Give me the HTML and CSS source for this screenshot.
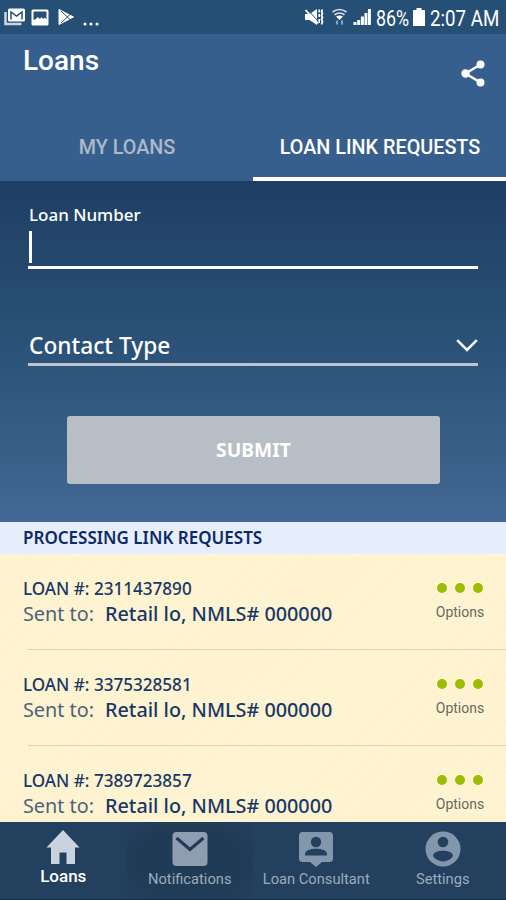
FILE: index.html
```html
<!DOCTYPE html>
<html lang="en">
<head>
	<meta charset="utf-8">
	<title>Loans</title>
	<link rel="stylesheet" href="styles.css">
</head>
<body>
	<div class="statusbar">
		<div class="notices">
			<svg width="22" height="18" viewBox="0 0 22 18">
				<path d="M1.500 4v12h16" fill="none" stroke="#c9d3df" stroke-width="2.600"/>
				<rect x="4" y="0.500" width="17" height="13" rx="1.500" fill="#fff"/>
				<path d="M7 11.500V4l5.500 4L18 4v7.500" fill="none" stroke="#264f76" stroke-width="1.500"/>
			</svg>
			<svg class="photo" width="18" height="17" viewBox="0 0 18 17">
				<rect x="0.500" y="0.500" width="17" height="16" rx="1.500" fill="#fff"/>
				<path d="M2.500 2.500h13v8l-1.500-2-2 1.500-1.500-2-1.500 2-2.500-2-1.500 2-2.500 1z" fill="#264f76"/>
			</svg>
			<svg class="play" width="17" height="18" viewBox="0 0 17 18">
				<path d="M1 1.500v15L15.500 9z" fill="#fff" stroke="#fff" stroke-linejoin="round"/>
				<path d="M3 3l9 8.500M3 15l9-8.500" stroke="#264f76" stroke-width="1"/>
			</svg>
			<svg class="more" width="16" height="4" viewBox="0 0 16 4">
				<circle cx="2" cy="2" r="1.500" fill="#fff"/>
				<circle cx="8" cy="2" r="1.500" fill="#fff"/>
				<circle cx="14" cy="2" r="1.500" fill="#fff"/>
			</svg>
		</div>
		<div class="system">
			<svg width="20" height="18" viewBox="0 0 20 18">
				<path d="M1 6h4.500L13 1v16l-7.500-5H1z" fill="#fff"/>
				<path d="M3.500 1.500L14 13" stroke="#264f76" stroke-width="1"/>
				<path d="M1.500 2L14 15.500" stroke="#fff" stroke-width="1.800"/>
				<path d="M15.200 1.500v3M15.200 6v3M15.200 11v4" stroke="#fff" stroke-width="1.600"/>
				<path d="M18.500 1.500l-1 2 1 2-1 2 1 2-1 2 1 2-1 3" fill="none" stroke="#fff" stroke-width="1.700"/>
			</svg>
			<svg class="wifi" width="15" height="18" viewBox="0 0 15 18">
				<path d="M0.500 4Q7.500-1 14.500 4M2.500 6.800q5-3.600 10 0" fill="none" stroke="#d5deea" stroke-width="1.700"/>
				<path d="M4 8.500q3.500-2 7 0L7.500 12z" fill="#fff"/>
				<path d="M5 12.500v4M10 12.500v4" stroke="#7fa6cf" stroke-width="2.200"/>
			</svg>
			<svg class="signal" width="18" height="18" viewBox="0 0 18 18">
				<path d="M0.500 17v-3h3v3zM4.200 17v-5h3v5zM7.900 17V8.500h3V17zM11.500 17V5h2.800v12zM14.900 17V1h3v16z" fill="#fff"/>
			</svg>
			<span class="percent">86%</span>
			<svg class="battery" width="12" height="18" viewBox="0 0 12 18">
				<path d="M3.500 0h5v2h3q.5 0 .5.500v15q0 .5-.5.500h-11Q0 18 0 17.500v-15Q0 2 .5 2h3z" fill="#fff"/>
			</svg>
			<span class="clock">2:07 AM</span>
		</div>
	</div>

	<header>
		<div class="titlebar">
			<h1>Loans</h1>
			<svg class="share" width="24" height="27" viewBox="0 0 24 27">
				<path d="M19.500 4.500L4.500 13.500l15 9" fill="none" stroke="#fff" stroke-width="2.500"/>
				<circle cx="19.500" cy="4.500" r="4" fill="#fff"/>
				<circle cx="4.500" cy="13.500" r="4.200" fill="#fff"/>
				<circle cx="19.500" cy="22.500" r="4" fill="#fff"/>
			</svg>
		</div>
		<nav class="tabs">
			<a class="tab"><span>MY LOANS</span></a>
			<a class="tab active"><span>LOAN LINK REQUESTS</span></a>
		</nav>
	</header>

	<form>
		<label class="loan-label">Loan Number</label>
		<div class="loan-input"><i class="caret"></i></div>
		<div class="contact">
			<span>Contact Type</span>
			<svg width="22" height="13" viewBox="0 0 22 13">
				<path d="M1.200 1.200L11 11l9.800-9.800" fill="none" stroke="#fff" stroke-width="2.500"/>
			</svg>
		</div>
		<button type="button">SUBMIT</button>
	</form>

	<h2>PROCESSING LINK REQUESTS</h2>

	<section class="requests">
		<article>
			<div class="info">
				<div class="number">LOAN #: 2311437890</div>
				<div class="sent"><span class="to">Sent to:</span><b>Retail lo, NMLS# 000000</b></div>
			</div>
			<div class="options">
				<div class="dots"><i></i><i></i><i></i></div>
				<span>Options</span>
			</div>
		</article>
		<article>
			<div class="info">
				<div class="number">LOAN #: 3375328581</div>
				<div class="sent"><span class="to">Sent to:</span><b>Retail lo, NMLS# 000000</b></div>
			</div>
			<div class="options">
				<div class="dots"><i></i><i></i><i></i></div>
				<span>Options</span>
			</div>
		</article>
		<article>
			<div class="info">
				<div class="number">LOAN #: 7389723857</div>
				<div class="sent"><span class="to">Sent to:</span><b>Retail lo, NMLS# 000000</b></div>
			</div>
			<div class="options">
				<div class="dots"><i></i><i></i><i></i></div>
				<span>Options</span>
			</div>
		</article>
	</section>

	<footer>
		<a class="item current">
			<svg width="36" height="36" viewBox="0 0 36 36">
				<path d="M18 1L1.500 18.500H6V35h8.500V23.500h7V35H30V18.500h4.500z" fill="#c9d3e0"/>
			</svg>
			<span>Loans</span>
		</a>
		<a class="item pressed">
			<svg width="36" height="36" viewBox="0 0 36 36">
				<rect x="0.500" y="1" width="35" height="34" rx="4" fill="#8e9eb0"/>
				<path d="M4.500 7L18 18.500 31.500 7" fill="none" stroke="#203b57" stroke-width="3.200"/>
			</svg>
			<span>Notifications</span>
		</a>
		<a class="item">
			<svg width="36" height="36" viewBox="0 0 36 36">
				<path d="M4.500 1h27q3.500 0 3.500 3.500v23q0 3.500-3.500 3.500H24l-6 5-6-5H4.500Q1 31 1 27.500v-23Q1 1 4.500 1z" fill="#8296ac"/>
				<circle cx="18" cy="11" r="5.200" fill="#24405f"/>
				<path d="M7 24.500v-1.500c0-7 22-7 22 0v1.500z" fill="#24405f"/>
			</svg>
			<span>Loan Consultant</span>
		</a>
		<a class="item">
			<svg width="36" height="36" viewBox="0 0 36 36">
				<circle cx="18" cy="18" r="17.500" fill="#8296ac"/>
				<circle cx="18" cy="11" r="5.300" fill="#24405f"/>
				<path d="M8 25c0-7 20-7 20 0-2.500 3.700-6 5.400-10 5.400S10.500 28.700 8 25z" fill="#24405f"/>
			</svg>
			<span>Settings</span>
		</a>
	</footer>
</body>
</html>
```
FILE: styles.css
```css
*{
	box-sizing: border-box;
}
body{
	margin: 0;
	width: 506px;
	height: 900px;
	overflow: hidden;
	display: flex;
	flex-direction: column;
	font-family: Roboto, sans-serif;
	color: #fff;
	background: #24405f;
}
svg{
	display: block;
	flex: none;
}
span, b, h1, h2, .number{
	white-space: nowrap;
}

/* status bar */
.statusbar{
	height: 34px;
	flex: none;
	display: flex;
	justify-content: space-between;
	padding: 0 8px 0 4px;
	background: #264f76;
}
.notices, .system{
	display: flex;
	align-items: center;
}
.photo{
	margin-left: 5px;
}
.play{
	margin-left: 9px;
}
.more{
	margin: 14px 0 0 8px;
}
.wifi{
	margin-left: 8px;
}
.signal{
	margin-left: 6px;
}
.percent, .clock{
	font-size: 21.5px;
	line-height: 34px;
	padding-top: 3px;
	transform-origin: left center;
}
.percent{
	width: 34px;
	margin-left: 5px;
	transform: scaleX(0.83);
}
.battery{
	margin-left: 3px;
}
.clock{
	width: 68px;
	margin-left: 5px;
	transform: scaleX(0.87);
}

/* title and tabs */
header{
	height: 147px;
	flex: none;
	background: #365f8d;
}
.titlebar{
	height: 80px;
	display: flex;
	justify-content: space-between;
	padding: 0 21px 0 23px;
}
h1{
	margin: 10px 0 0;
	font-size: 28px;
	line-height: 34px;
	font-weight: 500;
}
.share{
	margin-top: 26px;
}
.tabs{
	display: flex;
	height: 67px;
}
.tab{
	width: 50%;
	padding-left: 1px;
	text-align: center;
	font-size: 19.8px;
	line-height: 68px;
	font-weight: 500;
	color: #acb9c9;
}
.active{
	color: #fff;
	border-bottom: 4px solid #fff;
}

/* form */
form{
	height: 341px;
	flex: none;
	display: flex;
	flex-direction: column;
	padding: 0 28px;
	font-family: "Noto Sans", "Open Sans", sans-serif;
	background: linear-gradient(#1e3f63, #2c5379 52%, #426894);
}
.loan-label{
	margin-top: 22px;
	padding-left: 1px;
	font-size: 17px;
	line-height: 24px;
	font-weight: 500;
}
.loan-input{
	height: 42px;
	padding-top: 4px;
	border-bottom: 3px solid #fff;
}
.caret{
	display: block;
	width: 3px;
	height: 32px;
	margin-left: 1px;
	background: #fff;
}
.contact{
	height: 47px;
	margin-top: 50px;
	display: flex;
	justify-content: space-between;
	font-size: 22.7px;
	line-height: 30px;
	font-weight: 500;
	padding: 12px 0 0 1px;
	border-bottom: 3px solid #bcc5d0;
}
.contact svg{
	margin-top: 8px;
}
button{
	height: 68px;
	margin: 50px 38px 0 39px;
	padding: 0 0 2px;
	border: 0;
	border-radius: 3px;
	font: bold 19.3px "Noto Sans", sans-serif;
	color: #fff;
	background: #b8bec5;
}

/* requests */
h2{
	height: 32px;
	flex: none;
	margin: 0;
	padding-left: 23px;
	font: 600 17px/31px "Noto Sans", sans-serif;
	color: #0c2a66;
	background: #e7eefb;
}
.requests{
	height: 268px;
	flex: none;
	overflow: hidden;
	font-family: "Noto Sans", "Open Sans", sans-serif;
	color: #173868;
	background: repeating-linear-gradient(135deg, #fff3cf 0, #fff3cf 4px, #fff6da 5px, #fff3cf 6px);
}
article{
	height: 96px;
	display: flex;
	justify-content: space-between;
	padding: 0 21px 0 23px;
	background: linear-gradient(#d9d3bd, #d9d3bd) 28px 95px / 478px 2px no-repeat;
}
.number{
	margin-top: 23px;
	font-size: 17.1px;
	line-height: 24px;
	font-weight: 500;
}
.sent{
	font-size: 19.8px;
	line-height: 26px;
	display: flex;
}
.to{
	width: 82px;
	color: #4b6478;
}
.sent b{
	font-weight: 500;
}
.options{
	width: 50px;
	display: flex;
	flex-direction: column;
	align-items: center;
	padding-top: 29px;
	font: 14px/20px Roboto, sans-serif;
	color: #6a6a5e;
}
.dots{
	display: flex;
	gap: 8px;
	margin-bottom: 9px;
}
.dots i{
	width: 10px;
	height: 10px;
	border-radius: 50%;
	background: #9dbd05;
}

/* bottom navigation */
footer{
	height: 78px;
	flex: none;
	display: flex;
	background: #24405f;
	border-bottom: 1px solid #102c4a;
}
.item{
	width: 25%;
	display: flex;
	flex-direction: column;
	align-items: center;
	padding-top: 9px;
	font-size: 14.7px;
	line-height: 20px;
	color: #9cabbd;
}
.item span{
	margin-top: 2px;
}
.current{
	padding-top: 7px;
	font-size: 17px;
	font-weight: 500;
	color: #fff;
}
.current span{
	margin-top: 1px;
}
.pressed{
	background: radial-gradient(#203b55 60%, #24405f);
}
```
